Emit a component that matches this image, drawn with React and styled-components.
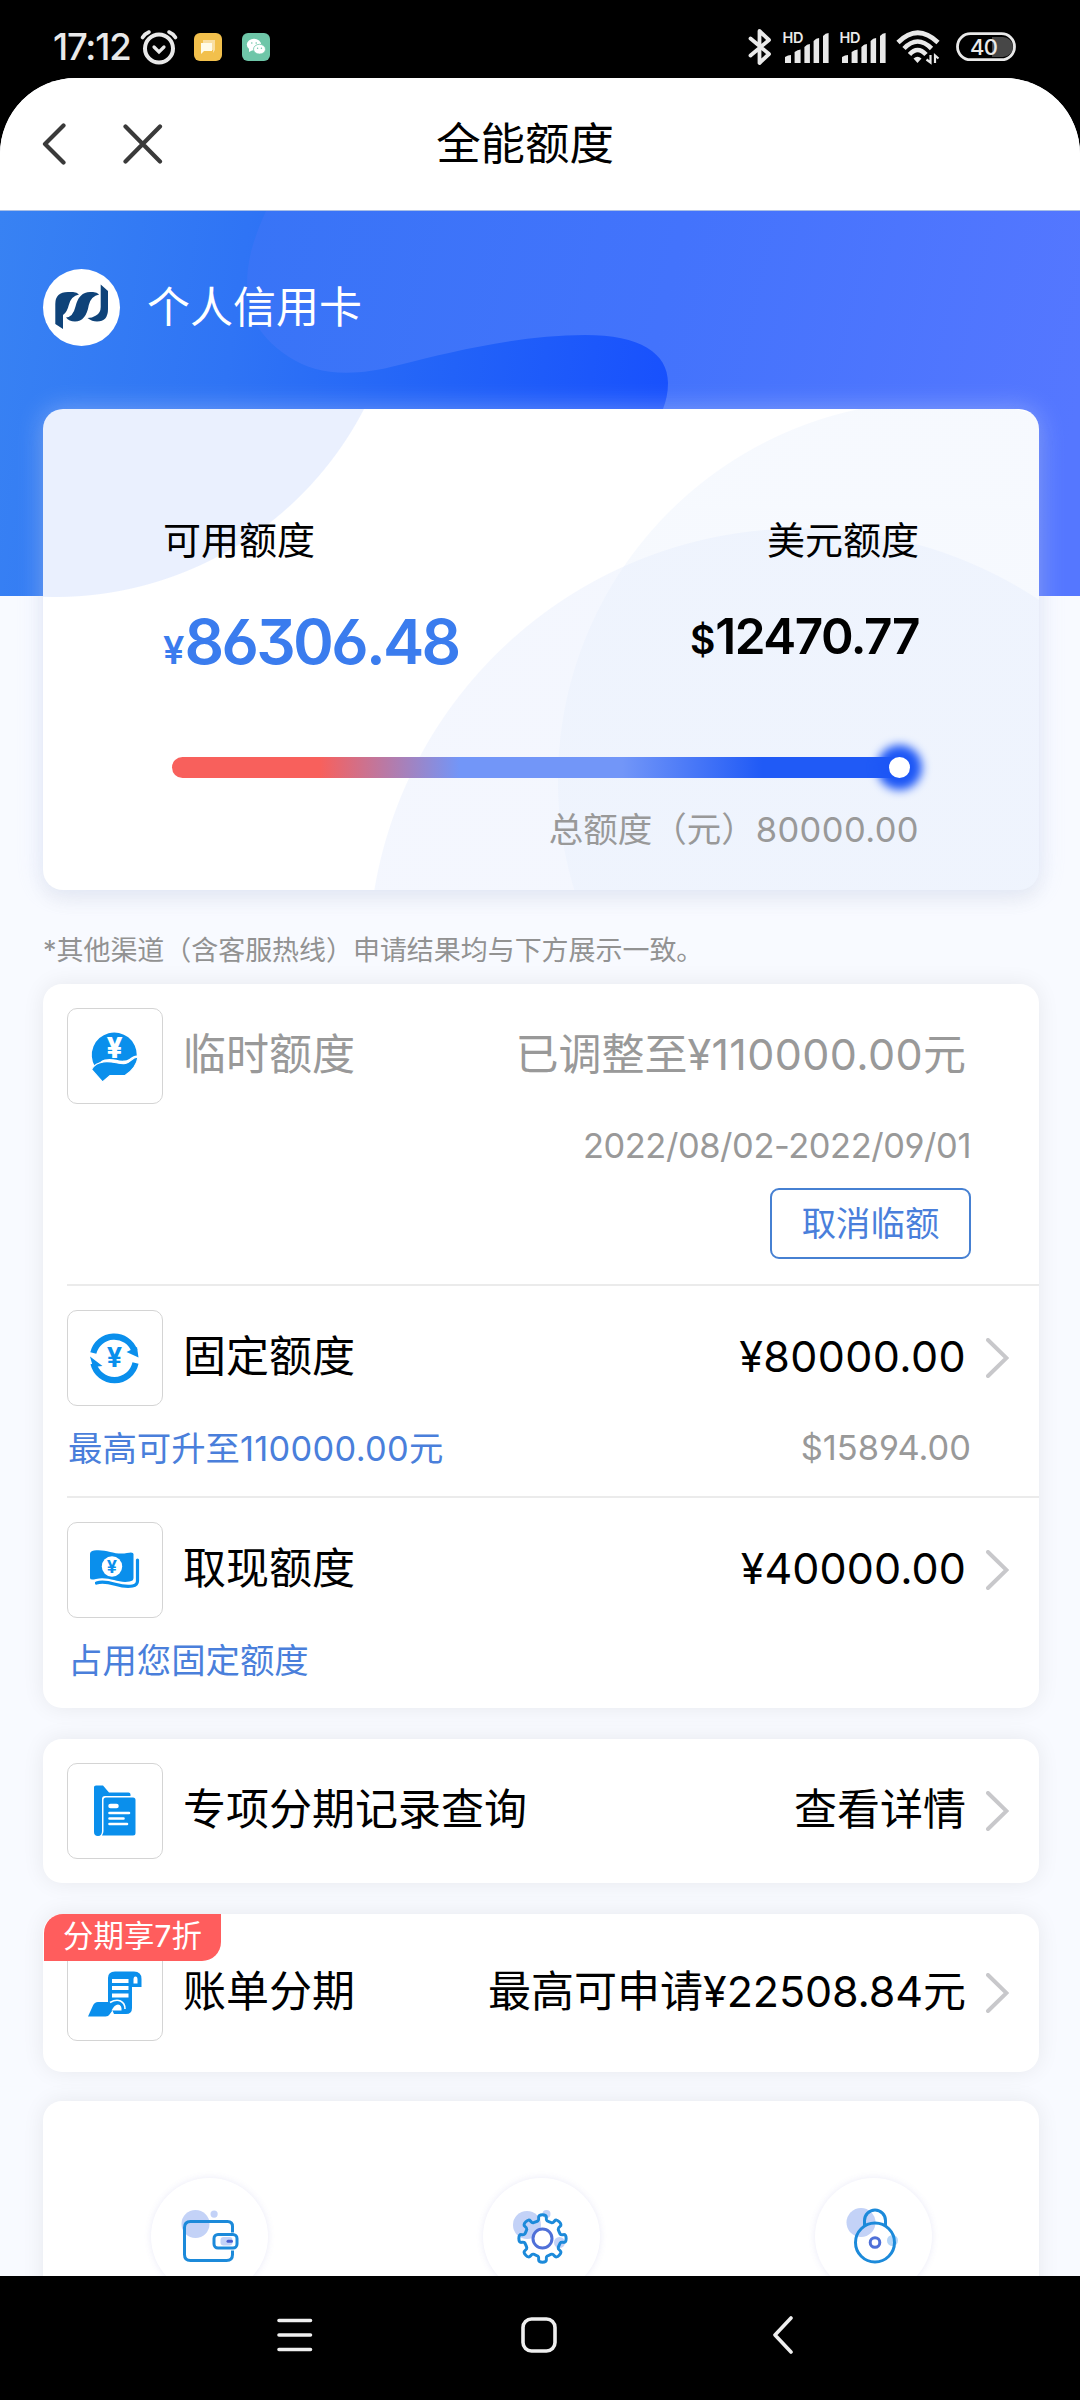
import React from "react";
import styled, { createGlobalStyle, css } from "styled-components";

const GlobalStyle = createGlobalStyle`
  * { box-sizing: border-box; }
  html, body { margin: 0; padding: 0; background: #000; }
  body {
    font-family: "Inter", "Noto Sans CJK SC", sans-serif;
    font-feature-settings: "cv03", "cv04", "cv09";
    color: #000;
  }
`;

const BLUE = "#0a8fec";

const Phone = styled.div`
  width: 1080px;
  height: 2400px;
  display: flex;
  flex-direction: column;
  background: #000;
  overflow: hidden;
`;

/* ---------- system status bar ---------- */

const StatusBar = styled.header`
  height: 78px;
  flex: none;
  display: flex;
  justify-content: space-between;
  align-items: center;
  padding: 16px 64px 0 53px;
  color: #e9e9e9;
`;

const StatusGroup = styled.div`
  display: flex;
  align-items: center;
  gap: ${(p) => p.$gap}px;
`;

const Clock = styled.span`
  width: 79px;
  font-size: 36.5px;
  line-height: 36px;
  font-weight: 500;
  letter-spacing: -1.2px;
  white-space: nowrap;
`;

const AlarmSlot = styled.span`
  display: flex;
  margin-left: 7px;
`;

const BatterySlot = styled.span`
  display: flex;
  margin-left: 6px;
`;

const AppTile = styled.span`
  display: flex;
  align-items: center;
  justify-content: center;
  width: 28px;
  height: 28px;
  border-radius: 6px;
  background: ${(p) => p.$color};
  margin-left: ${(p) => p.$gap}px;
`;

const SvgLabel = styled.text`
  font-family: "Inter", sans-serif;
  font-size: ${(p) => p.$size}px;
  font-weight: ${(p) => p.$weight || 600};
  letter-spacing: ${(p) => p.$ls || 0}px;
`;

/* ---------- app shell ---------- */

const Screen = styled.main`
  flex: 1;
  min-height: 0;
  overflow: hidden;
  border-radius: 76px 76px 0 0;
  background: #f8faff;
`;

const TitleBar = styled.div`
  height: 133px;
  display: grid;
  grid-template-columns: 1fr auto 1fr;
  align-items: center;
  padding: 0 72px 0 42px;
  background: #fff;
  border-bottom: 1px solid #a9bfe6;
`;

const TitleActions = styled.div`
  display: flex;
  align-items: center;
  gap: 56px;
`;

const Title = styled.h1`
  margin: 0;
  font-size: 44.4px;
  line-height: 60px;
  font-weight: 400;
`;

const Hero = styled.section`
  position: relative;
  height: 385px;
  background: linear-gradient(98deg, #3882f3 0%, #2f74f5 22%, #2262f8 42%, #1850fd 62%, #1850fd 100%);
`;

const HeroArt = styled.svg`
  position: absolute;
  inset: 0;
`;

const HeroHead = styled.div`
  position: relative;
  display: flex;
  align-items: center;
  gap: 27px;
  padding: 58px 0 0 43px;
  color: #fff;
  font-size: 43px;
  line-height: 60px;
`;

const HeroName = styled.span`
  margin-top: -2px;
`;

const Logo = styled.div`
  width: 77px;
  height: 77px;
  border-radius: 50%;
  background: #fff;
  display: flex;
`;

const Body = styled.div`
  position: relative;
  padding: 0 41px 0 43px;
  margin-top: -187px;
`;

/* ---------- limit summary card ---------- */

const LimitCard = styled.section`
  height: 481px;
  border-radius: 20px;
  padding: 105px 120px 0 120px;
  background:
    radial-gradient(circle at 894px 371px, rgba(228, 237, 252, 0.32) 378.5px, transparent 379.5px),
    radial-gradient(circle at 758px 552px, rgba(222, 231, 252, 0.34) 432px, transparent 433px),
    radial-gradient(circle at 12px -160px, #eaf0fe 347.5px, transparent 348.5px),
    #fff;
  box-shadow: 0 0 26px rgba(205, 218, 250, 0.45), 0 10px 20px rgba(0, 0, 0, 0.05);
`;

const LimitRow = styled.div`
  display: flex;
  justify-content: space-between;
  align-items: center;
`;

const AmountRow = styled(LimitRow)`
  align-items: flex-start;
  margin-top: 39px;
  height: 72px;
`;

const LimitName = styled.span`
  font-size: 38px;
  line-height: 52px;
`;

const Amount = styled.span`
  display: flex;
  align-items: baseline;
  font-weight: 600;
  ${(p) =>
    p.$main
      ? css`
          color: #3a7cee;
          font-size: 62px;
          line-height: 74px;
          letter-spacing: -2.7px;
        `
      : css`
          color: #000;
          font-size: 49.5px;
          line-height: 62px;
          letter-spacing: -1.5px;
        `}
`;

const Currency = styled.small`
  font-size: ${(p) => p.$size}px;
  letter-spacing: 0;
  margin-right: ${(p) => p.$gap || 0}px;
`;

const Track = styled.div`
  display: flex;
  justify-content: flex-end;
  align-items: center;
  margin: 80px 9px 0 9px;
  height: 21px;
  border-radius: 11px;
  background: linear-gradient(90deg, #f8605c 0%, #f8605c 20%, #7296f8 39%, #7296f8 61%, #205af6 80%, #205af6 100%);
`;

const Knob = styled.span`
  width: 21px;
  height: 21px;
  border-radius: 50%;
  background: #fff;
  box-shadow: 0 0 10px 12px #1d57f6;
`;

const Total = styled.p`
  margin: 27px 0 0;
  text-align: right;
  font-size: 34.5px;
  line-height: 50px;
  color: #999;
`;

const Num = styled.span`
  letter-spacing: ${(p) => p.$ls}px;
`;

const Note = styled.p`
  height: 94px;
  margin: 0;
  padding: 41px 0 0 0;
  font-size: 27px;
  line-height: 40px;
  letter-spacing: -0.05px;
  color: #929292;
  white-space: nowrap;
`;

/* ---------- list cards ---------- */

const Panel = styled.section`
  position: relative;
  margin-bottom: ${(p) => p.$mb}px;
  padding-left: 24px;
  border-radius: 19px;
  background: #fff;
  box-shadow: 0 0 22px rgba(0, 0, 0, 0.075);
`;

const Item = styled.div`
  height: ${(p) => p.$h}px;
  padding-top: ${(p) => p.$pt || 24}px;
  & + & {
    border-top: 2px solid #ebebeb;
  }
`;

const ItemHead = styled.div`
  display: flex;
  align-items: center;
  height: 96px;
  padding-right: ${(p) => (p.$arrow ? 30 : 73)}px;
  font-size: 43px;
  line-height: 60px;
  color: ${(p) => (p.$muted ? "#999" : "#000")};
`;

const IconBox = styled.div`
  flex: none;
  width: 96px;
  height: 96px;
  border: 1px solid #d4d4d4;
  border-radius: 10px;
  display: flex;
`;

const Label = styled.span`
  margin-left: 20px;
  margin-top: -4px;
`;

const Value = styled.span`
  margin-left: auto;
  margin-top: -4px;
  margin-right: ${(p) => (p.$arrow ? 20 : 0)}px;
  white-space: nowrap;
`;

const SubLine = styled.div`
  display: flex;
  justify-content: space-between;
  align-items: center;
  margin-top: 12px;
  height: 58px;
  padding: 0 68px 2px 1px;
  font-size: 34.4px;
`;

const Hint = styled.span`
  color: #4a7fdb;
`;

const SubValue = styled.span`
  margin-left: auto;
  padding-top: 3px;
  color: #999;
`;

const CancelButton = styled.button`
  display: block;
  margin: 14px 68px 0 auto;
  width: 201px;
  height: 71px;
  padding: 0;
  border: 2px solid #4680d2;
  border-radius: 9px;
  background: #fff;
  color: #4a7fdb;
  font: inherit;
  font-size: 34.4px;
  line-height: 62px;
`;

const Badge = styled.span`
  position: absolute;
  left: 1px;
  top: 0;
  width: 177px;
  height: 47px;
  border-radius: 19px 0 19px 0;
  background: #ff5d5d;
  color: #fff;
  font-size: 30.4px;
  line-height: 45px;
  text-align: center;
`;

const Shortcuts = styled(Panel)`
  display: grid;
  grid-template-columns: repeat(3, 1fr);
  justify-items: center;
  height: 260px;
  padding: 77px 0 0;
`;

const Round = styled.div`
  width: 117px;
  height: 117px;
  border-radius: 50%;
  background: #fff;
  box-shadow: 0 0 7px rgba(90, 90, 190, 0.13);
`;

/* ---------- navigation bar ---------- */

const NavBar = styled.footer`
  flex: none;
  height: 124px;
  display: grid;
  grid-template-columns: repeat(3, 244px);
  justify-content: center;
  justify-items: center;
  align-items: center;
  padding: 0 2px 6px 0;
`;

/* ---------- drawings ---------- */

const AlarmIcon = () => (
  <svg width="40" height="36" viewBox="0 0 40 36" fill="none" stroke="#e9e9e9" strokeWidth="4" strokeLinecap="round">
    <circle cx="20" cy="19.5" r="14" />
    <path d="M15 18l5 5 5-5" strokeWidth="3.2" />
    <path d="M3.5 8.5C5 6 7.500 4 10 3M36.500 8.500C35 6 32.500 4 30 3" strokeWidth="3.6" />
  </svg>
);

const ChatTile = () => (
  <AppTile $color="#f2c04c" $gap={15}>
    <svg width="20" height="20" viewBox="0 0 20 20">
      <path d="M5 3h12v10l-2 3v-3H5z" fill="#f9dfa3" />
      <path d="M3 6h11v8H6l-3 3z" fill="#fffbe8" />
    </svg>
  </AppTile>
);

const WechatTile = () => (
  <AppTile $color="#6ec6a8" $gap={20}>
    <svg width="20" height="20" viewBox="0 0 20 20" fill="#fff">
      <ellipse cx="8" cy="7.600" rx="7.200" ry="5.800" />
      <path d="M3 11l0 4 4-2z" />
      <ellipse cx="13.500" cy="12.200" rx="6" ry="4.900" stroke="#6ec6a8" strokeWidth=".8" />
      <circle cx="5.800" cy="6" r=".8" fill="#6ec6a8" />
      <circle cx="10.200" cy="6" r=".8" fill="#6ec6a8" />
      <circle cx="11.600" cy="11.200" r=".7" fill="#6ec6a8" />
      <circle cx="15.400" cy="11.200" r=".7" fill="#6ec6a8" />
    </svg>
  </AppTile>
);

const BluetoothIcon = () => (
  <svg width="24" height="38" viewBox="0 0 24 38" fill="none" stroke="#e9e9e9" strokeWidth="3.800" strokeLinejoin="round" strokeLinecap="round">
    <path d="M2.500 10.500L21 26 11.500 35V3L21 12 2.500 27.500" />
  </svg>
);

const SignalIcon = () => (
  <svg width="47" height="42" viewBox="0 -4 47 42" fill="#e9e9e9" overflow="visible">
    <SvgLabel x="0.500" y="13" $size={14.5} $weight={600} $ls={-0.4}>HD</SvgLabel>
    <path d="M3 27q3-2 6-2v8H3zM12.600 22q3-2.500 6-2.500V33h-6zM22.400 17q2.500-3 5.500-3v19h-5.500zM31.600 11q2.500-3 5.500-3v25h-5.500zM41 6q2.500-3 5.600-3v30H41z" />
  </svg>
);

const WifiIcon = () => (
  <svg width="44" height="36" viewBox="0 0 44 36" fill="none" stroke="#e9e9e9" strokeWidth="4.600">
    <path d="M2 13.500Q21.500-6 42 13.500M8 19.500Q21.500 5.500 35.500 19.500M13.500 25.500Q21.500 16.500 30 25.500" />
    <path d="M21.500 34l-4-4.500q4-3.500 8 0z" fill="#e9e9e9" stroke="none" />
    <path d="M34.500 26v7.500l-4-3M39 34v-7.500l3.500 3" strokeWidth="2.200" />
  </svg>
);

const BatteryIcon = () => (
  <svg width="60" height="30" viewBox="0 0 60 30">
    <path d="M36 5h11a10 10 0 0 1 0 20H36z" fill="#474747" />
    <rect x="1.500" y="1.700" width="57" height="26" rx="13" fill="none" stroke="#e9e9e9" strokeWidth="2.800" />
    <SvgLabel x="14" y="22.500" $size={22} $weight={500} $ls={-0.8} fill="#e9e9e9">40</SvgLabel>
  </svg>
);

const BackIcon = () => (
  <svg width="25" height="42" viewBox="0 0 25 42" fill="none" stroke="#3a3a3a" strokeWidth="4.200" strokeLinecap="round" strokeLinejoin="round">
    <path d="M21.500 2.500L3 21l18.500 18.500" />
  </svg>
);

const CloseIcon = () => (
  <svg width="40" height="40" viewBox="0 0 40 40" fill="none" stroke="#3a3a3a" strokeWidth="4.200" strokeLinecap="round">
    <path d="M2.500 2.500l34.500 35M37 2.500L2.500 37.500" />
  </svg>
);

const BankLogo = () => (
  <svg width="77" height="77" viewBox="0 0 77 77" fill="#0f4379">
    <path d="M12.300 55V35Q12.300 23 25 23H30Q34 23 36 25.500 28 27 25.800 36 24 43.500 20 46V60Z" />
    <path d="M23 48.500Q30 48 32.500 37.500 36 23 47 23H50Q54 23 56.200 25.500 48 27 45.800 36 43 52.500 32 52.500 26 52.500 23 48.500Z" />
    <path d="M44.500 49Q49 52.500 54 52.500 65 52.500 65 40V22L57.700 15.500V38Q57.700 44 53 46.500 49 49 44.500 49Z" />
  </svg>
);

const HeroShapes = () => (
  <HeroArt width="1080" height="385" viewBox="0 0 1080 385">
    <defs>
      <linearGradient id="wave" x1="247" y1="0" x2="1080" y2="190" gradientUnits="userSpaceOnUse">
        <stop offset="0" stopColor="#3874f6" />
        <stop offset=".5" stopColor="#4373fc" />
        <stop offset="1" stopColor="#5577ff" />
      </linearGradient>
    </defs>
    <path
      d="M266 0C250 35 245 60 248 85 251 110 262 128 289 146 315 163 350 167 399 154 450 141 520 124 585 124 640 124 668 142 668 172 668 182 666 190 663 198V385H1080V0Z"
      fill="url(#wave)"
    />
  </HeroArt>
);

const Yen = ({ x, y, size, color, weight = 700 }) => (
  <SvgLabel x={x} y={y} $size={size} $weight={weight} fill={color} textAnchor="middle">¥</SvgLabel>
);

const IconSvg = ({ children }) => (
  <svg width="94" height="94" viewBox="1 1 94 94">{children}</svg>
);

const HandCoinIcon = () => (
  <IconSvg>
    <path d="M28 58.500A22.500 22.500 0 1 1 69.800 47.500c-5 0-6.500 4.500-12 5-6 1-12-3-20-1-4 1-6 4-9.800 7z" fill={BLUE} />
    <Yen x={47.500} y={49.500} size={28} color="#fff" weight={800} />
    <path d="M24.500 61.500c3-5 6-6.500 12-7.500 8-1.500 16 2.500 22 1.500 5-1 6-6 12.500-6.500-1 7-6 14-13 18.500H43L35.500 74z" fill={BLUE} stroke="#fff" strokeWidth="1.200" />
  </IconSvg>
);

const CycleIcon = () => (
  <IconSvg>
    <g fill="none" stroke={BLUE} strokeWidth="6.200">
      <path d="M26.300 43A21.500 21.500 0 0 1 67.500 41" />
      <path d="M68.500 53A21.500 21.500 0 0 1 26.500 53.500" />
    </g>
    <path d="M71.500 47.500L59.500 42l10.500-5zM23 46.500l12.500 9.500-9.500 1z" fill={BLUE} />
    <Yen x={47.500} y={57} size={27} color={BLUE} />
  </IconSvg>
);

const BanknoteIcon = () => (
  <IconSvg>
    <path d="M23 32q0-3 4-3.500c12-2 21 5 33 2.500q6.500-1.500 6.500 1V56q0 3-4 3.500C52 62 42 54 29 57q-6 1.500-6-1z" fill={BLUE} />
    <circle cx="45" cy="44.500" r="10.200" fill="#fff" />
    <Yen x={45} y={51} size={18} color={BLUE} weight={700} />
    <path d="M70.500 38v21q0 4-5 5c-13 3-23-7-36-3" fill="none" stroke={BLUE} strokeWidth="3.200" strokeLinecap="round" />
  </IconSvg>
);

const FilesIcon = () => (
  <IconSvg>
    <path d="M27 24q0-1.500 2-1.500h7l6 7h19.500q2 0 2 2v1.500H38q-3 0-3 3V68q0 5-4 5t-4-4z" fill={BLUE} />
    <path d="M36.500 37q0-2.500 2.500-2.500H66q2.500 0 2.500 2.500v33q0 2.500-2.500 2.500H35q1.500-2 1.500-4.500z" fill={BLUE} />
    <g stroke="#fff" strokeLinecap="round" strokeWidth="2.600">
      <path d="M43.500 43h6" strokeWidth="4.500" />
      <path d="M42.500 50h19.500M42.500 55.500h14M42.500 61h17.500" />
    </g>
  </IconSvg>
);

const BillIcon = () => (
  <IconSvg>
    <path d="M41 60V33q0-6.500 7-6.500h19q7.500 0 7.500 7.500v8H65v21q0 6-6 6H47l-4-9z" fill={BLUE} />
    <path d="M66.500 38.500v-4q0-3 2-3t2 3v4z" fill="#fff" />
    <path d="M45 36h16.500M45 43h16.500M45 50.500h16.500" stroke="#fff" strokeWidth="4" />
    <path d="M21 71.500l5-11q1.500-3.500 5-3.500h13q9-5 13.500 2-6-1.500-9.500 3l-5.500 7.500q-1 2-4 2z" fill={BLUE} />
    <path d="M43 57.500q6-3.500 10.500-1.500 4.500 2 4.500 8" fill="none" stroke="#fff" strokeWidth="1.600" />
    <path d="M44.500 65.500q3-6 6.500-6 4 .5 3.500 6z" fill="#fff" />
  </IconSvg>
);

const Chevron = () => (
  <svg width="23" height="40" viewBox="0 0 23 40" fill="none" stroke="#c8c8cb" strokeWidth="4" strokeLinecap="round">
    <path d="M2 2l18.500 18L2 38" />
  </svg>
);

const TINT = "#c3d2f7";

const WalletIcon = () => (
  <svg width="117" height="117" viewBox="-58.500 -58.500 117 117" fill="none" strokeWidth="3" stroke="#1c8ada">
    <circle cx="-14" cy="-12.500" r="14" fill={TINT} stroke="none" />
    <circle cx="4.600" cy="-22.400" r="3.600" fill={TINT} stroke="none" />
    <path d="M23-4v-6q0-5-5-5h-37q-6 0-6 6v27q0 6 6 6h36q6 0 6-6v-4" />
    <rect x="4.500" y="-2" width="23" height="13.500" rx="4" fill="#fff" />
    <rect x="11" y=".5" width="12" height="8.500" rx="3" fill={TINT} stroke="none" />
    <path d="M18.500 4.800h3.500" stroke="#4a5fd0" strokeLinecap="round" />
  </svg>
);

const gearPath = (() => {
  const pts = [];
  for (let i = 0; i < 8; i += 1) {
    const base = (i * 45 - 90) * (Math.PI / 180);
    [[-17, 18], [-11, 18.6], [-10, 24], [10, 24], [11, 18.6], [17, 18]].forEach(([a, r]) => {
      const t = base + (a * Math.PI) / 180;
      pts.push([r * Math.cos(t), 2 + r * Math.sin(t)]);
    });
  }
  const mid = (a, b) => [(a[0] + b[0]) / 2, (a[1] + b[1]) / 2];
  const f = (p) => `${p[0].toFixed(2)} ${p[1].toFixed(2)}`;
  let d = `M${f(mid(pts[pts.length - 1], pts[0]))}`;
  pts.forEach((p, i) => {
    d += `Q${f(p)} ${f(mid(p, pts[(i + 1) % pts.length]))}`;
  });
  return `${d}Z`;
})();

const GearIcon = () => (
  <svg width="117" height="117" viewBox="-58.500 -58.500 117 117" fill="none" strokeWidth="3">
    <circle cx="-14.500" cy="-11.500" r="14" fill={TINT} />
    <circle cx="5" cy="-22.500" r="4" fill={TINT} />
    <circle cx="18" cy="6" r="5.500" fill={TINT} />
    <g transform="translate(1 0)">
      <path d={gearPath} stroke="#1c8ada" />
      <circle cx="0" cy="2" r="9.500" stroke="#4f70d8" fill="#fff" />
    </g>
  </svg>
);

const LockIcon = () => (
  <svg width="117" height="117" viewBox="-58.500 -58.500 117 117" fill="none" strokeWidth="3" stroke="#1c8ada">
    <circle cx="-12.500" cy="-14" r="14.500" fill={TINT} stroke="none" />
    <circle cx="19" cy="4" r="5.500" fill="#b5d6f8" stroke="none" />
    <circle cx="1.500" cy="6" r="19.500" />
    <path d="M-9-10.500v-5.500a10.500 10.500 0 0 1 21 0v5.500" />
    <circle cx="1.500" cy="6" r="4.800" stroke="#4f70d8" />
  </svg>
);

const MenuIcon = () => (
  <svg width="38" height="36" viewBox="0 0 38 36" stroke="#efefef" strokeWidth="3.600" strokeLinecap="round">
    <path d="M3 3.500h31.500M3 18h31.500M3 32.500h31.500" />
  </svg>
);

const HomeIcon = () => (
  <svg width="38" height="38" viewBox="0 0 38 38" fill="none" stroke="#efefef" strokeWidth="3.600">
    <rect x="3" y="3" width="32" height="32" rx="8.500" />
  </svg>
);

const NavBackIcon = () => (
  <svg width="20" height="38" viewBox="0 0 20 38" fill="none" stroke="#efefef" strokeWidth="3.600" strokeLinecap="round" strokeLinejoin="round">
    <path d="M18 2L2 19l16 17" />
  </svg>
);

/* ---------- page ---------- */

const ItemRow = ({ icon, label, value, arrow, muted }) => (
  <ItemHead $arrow={arrow} $muted={muted}>
    <IconBox>{icon}</IconBox>
    <Label>{label}</Label>
    <Value $arrow={arrow}>{value}</Value>
    {arrow && <Chevron />}
  </ItemHead>
);

export default function App() {
  return (
    <>
      <GlobalStyle />
      <Phone>
        <StatusBar>
          <StatusGroup $gap={0}>
            <Clock>17:12</Clock>
            <AlarmSlot>
              <AlarmIcon />
            </AlarmSlot>
            <ChatTile />
            <WechatTile />
          </StatusGroup>
          <StatusGroup $gap={10}>
            <BluetoothIcon />
            <SignalIcon />
            <SignalIcon />
            <WifiIcon />
            <BatterySlot>
              <BatteryIcon />
            </BatterySlot>
          </StatusGroup>
        </StatusBar>

        <Screen>
          <TitleBar>
            <TitleActions>
              <BackIcon />
              <CloseIcon />
            </TitleActions>
            <Title>全能额度</Title>
          </TitleBar>

          <Hero>
            <HeroShapes />
            <HeroHead>
              <Logo>
                <BankLogo />
              </Logo>
              <HeroName>个人信用卡</HeroName>
            </HeroHead>
          </Hero>

          <Body>
            <LimitCard>
              <LimitRow>
                <LimitName>可用额度</LimitName>
                <LimitName>美元额度</LimitName>
              </LimitRow>
              <AmountRow>
                <Amount $main>
                  <Currency $size={38} $gap={0}>¥</Currency>
                  86306.48
                </Amount>
                <Amount>
                  <Currency $size={39}>$</Currency>
                  12470.77
                </Amount>
              </AmountRow>
              <Track>
                <Knob />
              </Track>
              <Total>
                总额度（元）<Num $ls={0.4}>80000.00</Num>
              </Total>
            </LimitCard>

            <Note>*其他渠道（含客服热线）申请结果均与下方展示一致。</Note>

            <Panel $mb={31}>
              <Item $h={300}>
                <ItemRow
                  muted
                  icon={<HandCoinIcon />}
                  label="临时额度"
                  value={<>已调整至<Num $ls={0.4}>¥110000.00</Num>元</>}
                />
                <SubLine>
                  <SubValue><Num $ls={-0.4}>2022/08/02-2022/09/01</Num></SubValue>
                </SubLine>
                <CancelButton>取消临额</CancelButton>
              </Item>
              <Item $h={212}>
                <ItemRow arrow icon={<CycleIcon />} label="固定额度" value={<Num $ls={0.4}>¥80000.00</Num>} />
                <SubLine>
                  <Hint>最高可升至<Num $ls={0.3}>110000.00</Num>元</Hint>
                  <SubValue><Num $ls={0}>$15894.00</Num></SubValue>
                </SubLine>
              </Item>
              <Item $h={212}>
                <ItemRow arrow icon={<BanknoteIcon />} label="取现额度" value={<Num $ls={0.1}>¥40000.00</Num>} />
                <SubLine>
                  <Hint>占用您固定额度</Hint>
                </SubLine>
              </Item>
            </Panel>

            <Panel $mb={31}>
              <Item $h={144}>
                <ItemRow arrow icon={<FilesIcon />} label="专项分期记录查询" value="查看详情" />
              </Item>
            </Panel>

            <Panel $mb={29}>
              <Item $h={158} $pt={31}>
                <ItemRow
                  arrow
                  icon={<BillIcon />}
                  label="账单分期"
                  value={<>最高可申请<Num $ls={-0.1}>¥22508.84</Num>元</>}
                />
              </Item>
              <Badge>分期享7折</Badge>
            </Panel>

            <Shortcuts $mb={0}>
              <Round><WalletIcon /></Round>
              <Round><GearIcon /></Round>
              <Round><LockIcon /></Round>
            </Shortcuts>
          </Body>
        </Screen>

        <NavBar>
          <MenuIcon />
          <HomeIcon />
          <NavBackIcon />
        </NavBar>
      </Phone>
    </>
  );
}
